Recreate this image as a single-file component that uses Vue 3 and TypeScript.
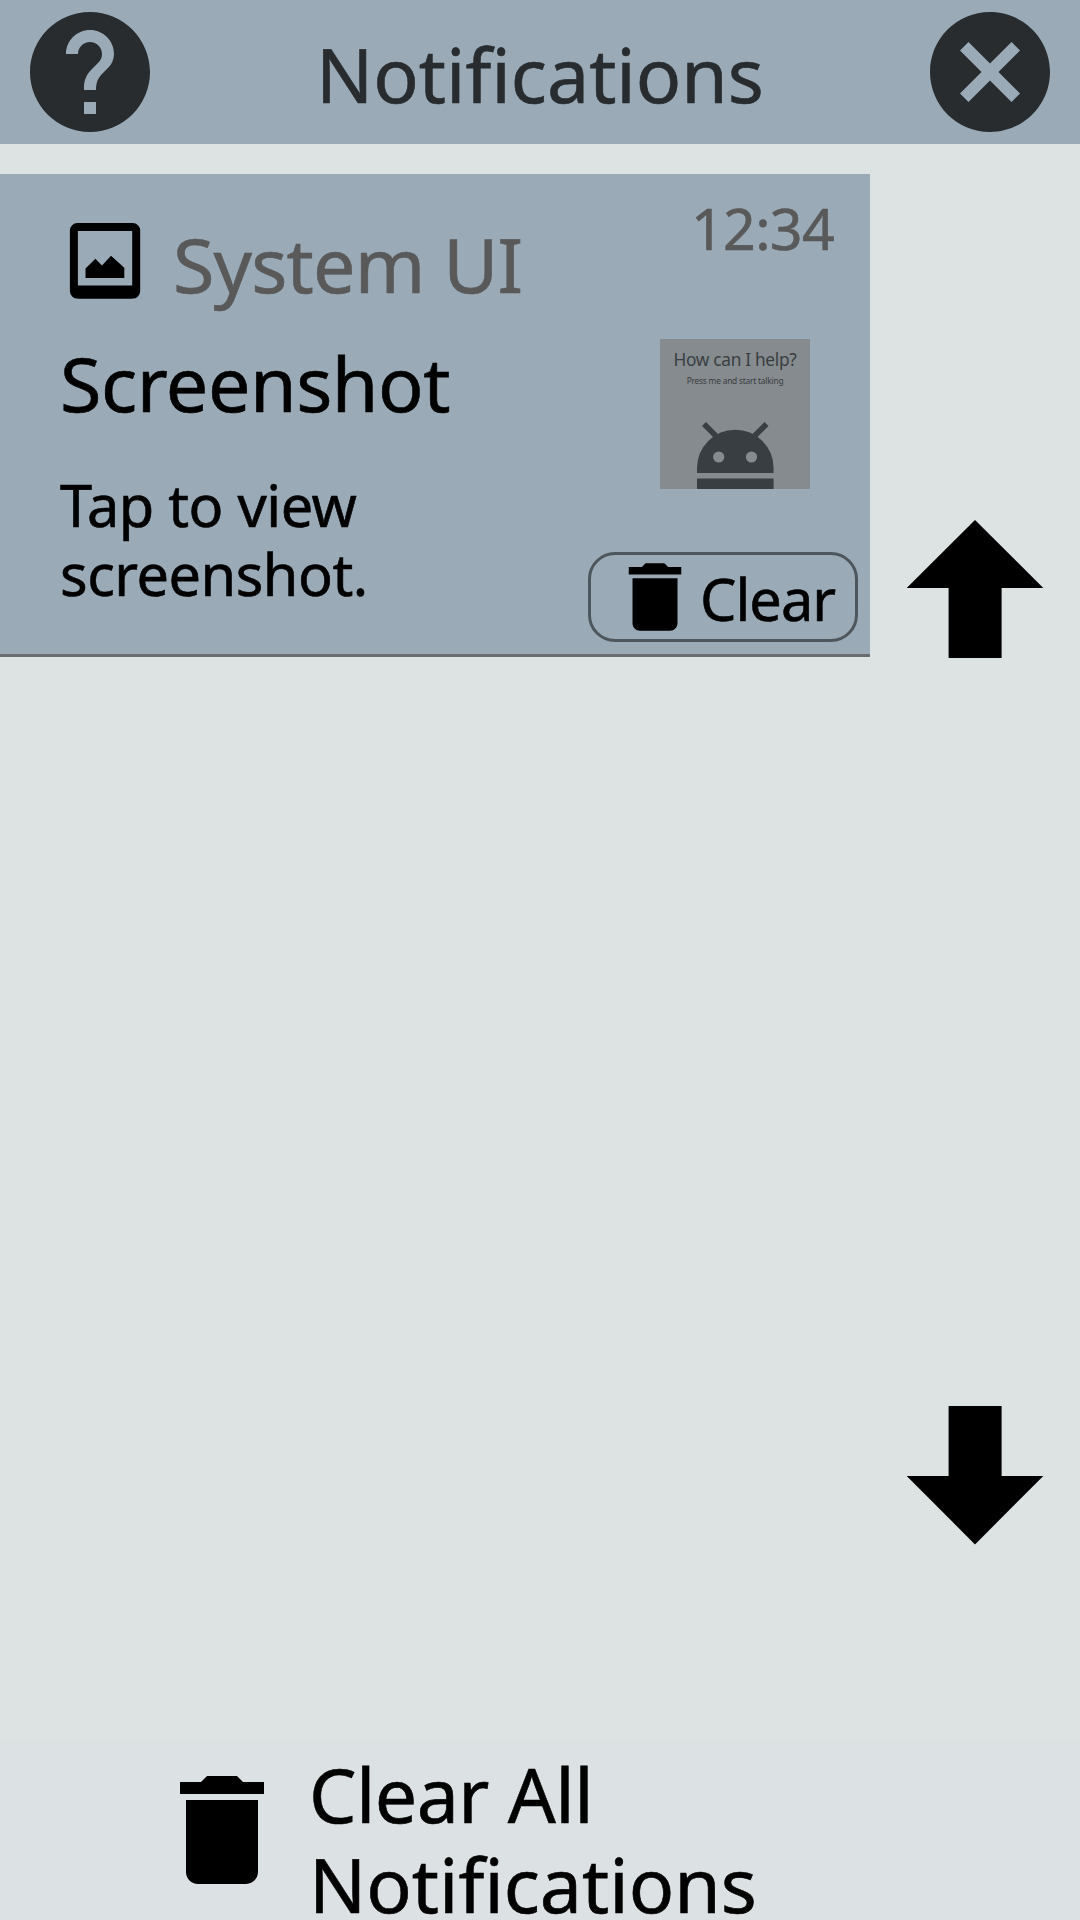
<script setup lang="ts">
interface NotificationItem {
  id: number
  app: string
  time: string
  title: string
  lines: string[]
}

const notifications: NotificationItem[] = [
  { id: 1, app: 'System UI', time: '12:34', title: 'Screenshot', lines: ['Tap to view', 'screenshot.'] },
]

const trashPath =
  'M6 19c0 1.1.9 2 2 2h8c1.1 0 2-.9 2-2V7H6v12zM19 4h-3.5l-1-1h-5l-1 1H5v2h14V4z'
</script>

<template>
  <div class="screen">
    <header class="header">
      <svg class="header-icon" viewBox="2 2 20 20" aria-label="Help">
        <path
          d="M12 2C6.48 2 2 6.48 2 12s4.48 10 10 10 10-4.48 10-10S17.52 2 12 2zm1 17h-2v-2h2v2zm2.07-7.75l-.9.92C13.45 12.9 13 13.5 13 15h-2v-.5c0-1.1.45-2.1 1.17-2.83l1.24-1.26c.37-.36.59-.86.59-1.41 0-1.1-.9-2-2-2s-2 .9-2 2H8c0-2.21 1.79-4 4-4s4 1.79 4 4c0 .88-.36 1.68-.93 2.25z"
        />
      </svg>
      <h1 class="title">Notifications</h1>
      <svg class="header-icon" viewBox="2 2 20 20" aria-label="Close">
        <path
          d="M12 2C6.47 2 2 6.47 2 12s4.47 10 10 10 10-4.47 10-10S17.53 2 12 2zm5 13.59L15.59 17 12 13.41 8.41 17 7 15.59 10.59 12 7 8.41 8.41 7 12 10.59 15.59 7 17 8.41 13.41 12 17 15.59z"
        />
      </svg>
    </header>

    <main class="content">
      <section class="list">
        <article v-for="item in notifications" :key="item.id" class="card">
          <div class="details">
            <div class="app-row">
              <svg class="app-icon" viewBox="0 0 90 90">
                <rect x="13.9" y="11.1" width="62.3" height="67.5" rx="3.5" fill="none" stroke="#000" stroke-width="8" />
                <path d="M12 69.5h66v6a7 7 0 0 1-7 7H19a7 7 0 0 1-7-7z" />
                <path d="M25.5 52.5L35.4 42.8L42 49.5L51 39.7L64.3 51.7V61.9H25.5z" />
              </svg>
              <span class="app-name">{{ item.app }}</span>
            </div>
            <h2 class="card-title">{{ item.title }}</h2>
            <p class="message">
              <span v-for="line in item.lines" :key="line">{{ line }}</span>
            </p>
          </div>
          <div class="side">
            <time class="time">{{ item.time }}</time>
            <div class="thumb">
              <span class="thumb-title">How can I help?</span>
              <span class="thumb-sub">Press me and start talking</span>
              <svg class="robot" viewBox="0 80 150 70">
                <path d="M37 134v-5a38.3 38.3 0 0 1 76.6 0v5z" />
                <path d="M44 85l14 14M106.5 85l-14 14" stroke="#383e42" stroke-width="5.6" />
                <path d="M37 139.500h76.600v11H37z" />
                <circle class="eye" cx="58.7" cy="118" r="5.6" />
                <circle class="eye" cx="91.5" cy="118" r="5.6" />
              </svg>
            </div>
            <button class="clear" type="button">
              <svg class="clear-icon" viewBox="0 0 24 24"><path :d="trashPath" /></svg>
              <span class="clear-label">Clear</span>
            </button>
          </div>
        </article>
      </section>

      <nav class="scroller">
        <svg class="arrow" viewBox="0 0 138 138">
          <path d="M69 0L137.3 68H95.6V138H42.6V68H.7z" />
        </svg>
        <svg class="arrow" viewBox="0 0 138 138">
          <path d="M42.6 0H95.6V70H137.3L69 138.4L.7 70H42.6z" />
        </svg>
      </nav>
    </main>

    <footer class="footer">
      <svg class="footer-icon" viewBox="0 0 24 24"><path :d="trashPath" /></svg>
      <div class="footer-label">
        <span class="footer-first">Clear All</span>
        <span>Notifications</span>
      </div>
    </footer>
  </div>
</template>

<style>
body {
  margin: 0;
}
</style>

<style scoped>
.screen {
  box-sizing: border-box;
  display: flex;
  flex-direction: column;
  width: 1080px;
  height: 1920px;
  overflow: hidden;
  background: #dde3e3;
  color: #000;
  font-family: 'Noto Sans', 'Open Sans', sans-serif;
  -webkit-text-stroke: 0.6px currentColor;
}

svg {
  display: block;
  flex: none;
}

h1,
h2,
p {
  margin: 0;
  font-weight: 400;
}

.header {
  box-sizing: border-box;
  display: flex;
  align-items: center;
  justify-content: space-between;
  flex: none;
  height: 144px;
  padding: 0 30px;
  background: #9aabb7;
  color: #282c2f;
}

.header-icon {
  width: 120px;
  height: 120px;
  fill: #282c2f;
}

.title {
  padding-top: 3px;
  font-size: 75.3px;
  line-height: 90px;
  white-space: nowrap;
}

.content {
  box-sizing: border-box;
  display: flex;
  flex: none;
  height: 1597px;
  padding-top: 30px;
}

.list {
  width: 870px;
}

.card {
  box-sizing: border-box;
  display: flex;
  justify-content: space-between;
  height: 483px;
  border-bottom: 3px solid #6b6c6f;
  background: #9aabb7;
}

.details {
  padding: 42px 0 0 60px;
}

.app-row {
  display: flex;
  height: 90px;
}

.app-icon {
  width: 90px;
  height: 90px;
}

.app-name {
  margin-left: 23px;
  color: #595959;
  font-size: 75.5px;
  letter-spacing: -0.85px;
  line-height: 96px;
  white-space: nowrap;
}

.card-title {
  margin-top: 27px;
  font-size: 75.5px;
  letter-spacing: -0.5px;
  line-height: 100px;
}

.message {
  display: flex;
  flex-direction: column;
  margin-top: 37px;
  font-size: 57.7px;
  letter-spacing: -0.5px;
  line-height: 69px;
}

.side {
  display: flex;
  flex-direction: column;
  align-items: flex-end;
  padding: 15px 12px 0 0;
}

.time {
  margin-right: 24px;
  color: #595959;
  font-size: 57.3px;
  letter-spacing: -0.7px;
  line-height: 78px;
}

.thumb {
  display: flex;
  flex-direction: column;
  align-items: center;
  width: 150px;
  height: 150px;
  margin: 72px 48px 0 0;
  overflow: hidden;
  background: #868b8f;
  color: #383e42;
  -webkit-text-stroke: 0;
}

.thumb-title {
  margin-top: 8px;
  font-size: 17.3px;
  letter-spacing: -0.3px;
  line-height: 25px;
  white-space: nowrap;
}

.thumb-sub {
  margin-top: 2px;
  font-size: 8.4px;
  letter-spacing: -0.22px;
  line-height: 14px;
  white-space: nowrap;
}

.robot {
  width: 150px;
  height: 70px;
  margin-top: 31px;
  fill: #383e42;
}

.eye {
  fill: #868b8f;
}

.clear {
  box-sizing: border-box;
  display: flex;
  align-items: center;
  width: 270px;
  height: 90px;
  margin-top: 63px;
  padding: 0 0 0 19px;
  border: 3px solid #4d565c;
  border-radius: 27px;
  background: none;
  color: #000;
  font: inherit;
  -webkit-text-stroke: inherit;
}

.clear-icon {
  width: 90px;
  height: 90px;
}

.clear-label {
  padding-top: 3px;
  font-size: 57.7px;
  letter-spacing: -1px;
  line-height: 84px;
}

.scroller {
  display: flex;
  flex-direction: column;
  align-items: center;
  justify-content: space-between;
  box-sizing: border-box;
  width: 210px;
  padding: 346px 0 197px;
}

.arrow {
  width: 138px;
  height: 138px;
  overflow: visible;
}

.footer {
  display: flex;
  align-items: flex-start;
  flex: none;
  height: 179px;
  background: #dce1e4;
}

.footer-icon {
  width: 144px;
  height: 144px;
  margin: 17px 0 0 150px;
}

.footer-label {
  display: flex;
  flex-direction: column;
  margin: 8px 0 0 15px;
  font-size: 75.3px;
  line-height: 90px;
  white-space: nowrap;
}

.footer-first {
  letter-spacing: -0.6px;
}
</style>
